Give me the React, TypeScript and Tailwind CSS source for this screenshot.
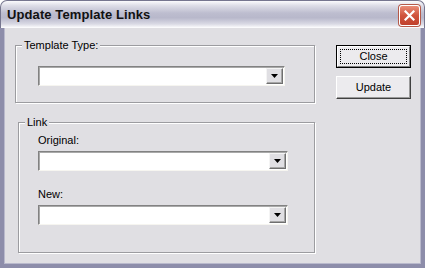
const font = "font-['Liberation_Sans',Arial,sans-serif]";

const DropArrow = () => (
  <svg width="7" height="4" viewBox="0 0 7 4" className="block">
    <path d="M0 0h7L3.5 4z" fill="#000" />
  </svg>
);

const ComboBox = ({ className }: { className: string }) => (
  <div
    className={`${className} h-[20px] flex border border-t-[#828282] border-l-[#828282] border-r-[#f6f5f0] border-b-[#f6f5f0] bg-white shadow-[inset_1px_1px_0_#a9a9a9]`}
  >
    <div className="flex-1" />
    <div className="w-[17px] h-[16px] mt-[1px] mr-[1px] flex items-center justify-center bg-[#e0dfe3] border border-t-[#f4f4f4] border-l-[#f4f4f4] border-r-[#6f6f6f] border-b-[#6f6f6f] shadow-[inset_-1px_-1px_0_#a6a6a6]">
      <DropArrow />
    </div>
  </div>
);

const GroupBox = ({
  label,
  className,
  children,
}: {
  label: string;
  className: string;
  children: React.ReactNode;
}) => (
  <div
    className={`${className} relative border border-[#9c9ca0] shadow-[1px_1px_0_#ffffff,inset_1px_1px_0_#ffffff]`}
  >
    <span className="absolute -top-[7px] left-[6px] px-[2px] bg-[#e0dfe3] text-[11px] leading-[13px] text-black">
      {label}
    </span>
    {children}
  </div>
);

export default function App() {
  return (
    <div className={`${font} w-[425px] h-[268px] flex flex-col bg-white`}>
      <div className="h-[28px] flex items-center rounded-t-[7px] border border-b-0 border-[#76768f] bg-[linear-gradient(to_bottom,#fbfbfd_0%,#dcdce6_18%,#bdbdcf_45%,#b8b8cb_62%,#d9d9e4_85%,#ffffff_100%)]">
        <span className="ml-[6px] text-[13px] font-bold text-[#111] tracking-[0.1px]">
          Update Template Links
        </span>
        <div className="ml-auto mr-[4px] mt-[2px] w-[21px] h-[21px] rounded-[3px] border border-white bg-[linear-gradient(to_bottom,#e98d78,#d0543d_50%,#c0402c)] shadow-[0_0_0_1px_#b55a4a] flex items-center justify-center">
          <svg width="11" height="11" viewBox="0 0 11 11">
            <path d="M1.5 1.5l8 8M9.5 1.5l-8 8" stroke="#fff" strokeWidth="2.2" strokeLinecap="square" />
          </svg>
        </div>
      </div>

      <div className="flex-1 flex border-x-[4px] border-b-[4px] border-x-[#8d8daa] border-b-[#8d8daa] shadow-[inset_0_0_0_1px_#6d6d8a]">
        <div className="flex-1 flex bg-[#e0dfe3] border border-t-0 border-[#b9b9cc] pl-[10px] pt-[17px]">
          <div className="flex flex-col">
            <GroupBox label="Template Type:" className="w-[300px] h-[58px] pl-[22px] pt-[20px]">
              <ComboBox className="w-[247px]" />
            </GroupBox>

            <GroupBox label="Link" className="ml-[3px] mt-[19px] w-[297px] h-[131px] pl-[19px] pt-[11px]">
              <div className="text-[11px] leading-[13px] text-black">Original:</div>
              <ComboBox className="mt-[4px] w-[250px]" />
              <div className="mt-[17px] text-[11px] leading-[13px] text-black">New:</div>
              <ComboBox className="mt-[4px] w-[250px]" />
            </GroupBox>
          </div>

          <div className="ml-[21px] flex flex-col gap-[8px]">
            <button className="w-[75px] h-[23px] border border-black bg-[#ecebee] p-0">
              <div className="h-full border border-t-white border-l-white border-r-[#808080] border-b-[#808080] p-[2px]">
                <div className="h-full flex items-center justify-center border border-dotted border-black text-[11px] text-black">
                  Close
                </div>
              </div>
            </button>
            <button className="w-[75px] h-[23px] border border-t-white border-l-white border-r-[#404040] border-b-[#404040] bg-[#ecebee] shadow-[inset_-1px_-1px_0_#9a9a9a] flex items-center justify-center text-[11px] text-black">
              Update
            </button>
          </div>
        </div>
      </div>
    </div>
  );
}
